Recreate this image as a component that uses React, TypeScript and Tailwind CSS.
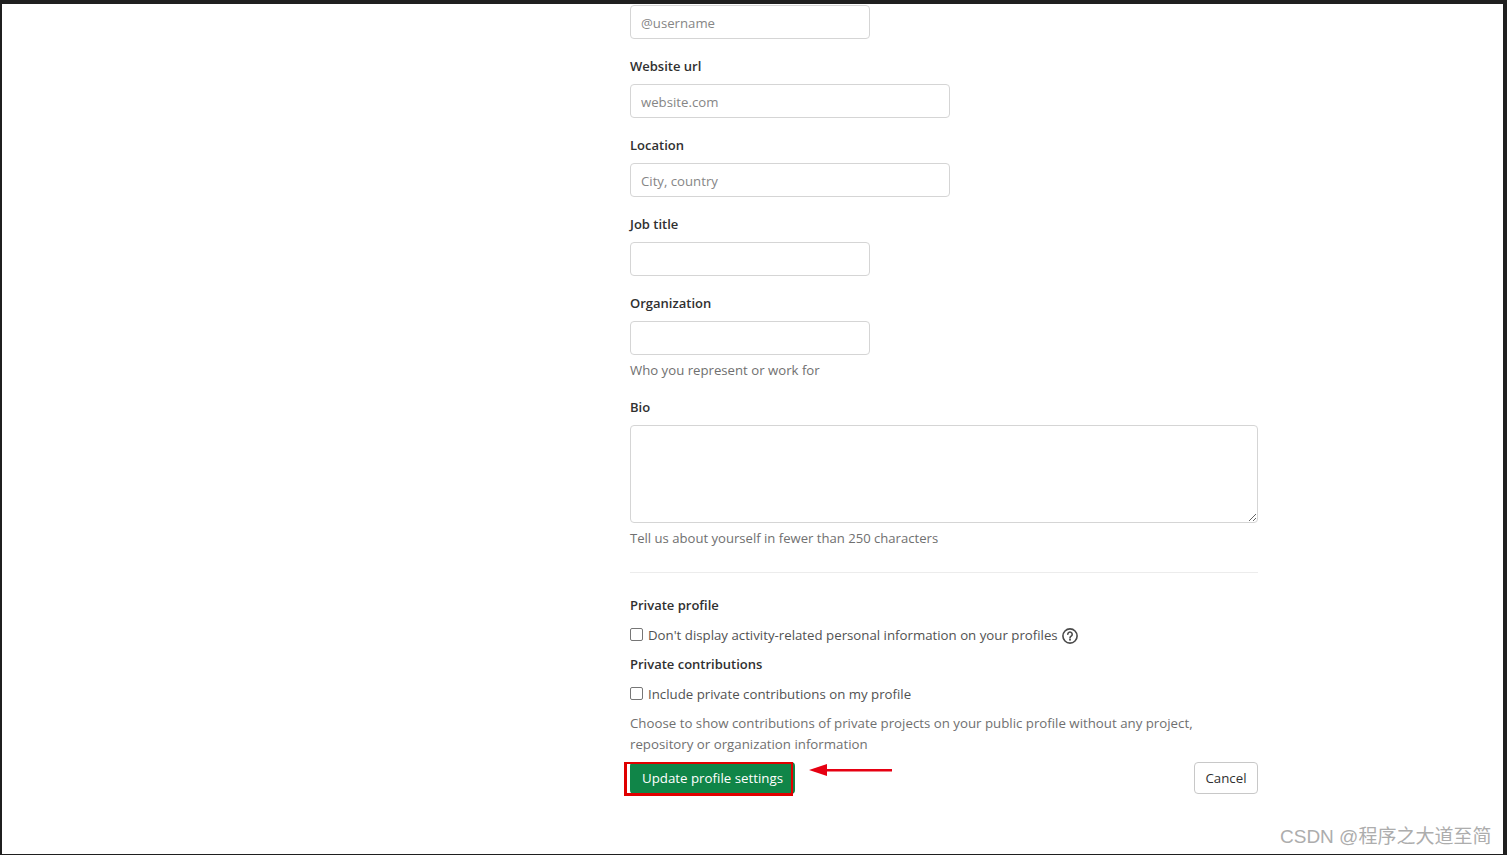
const FONT = "font-['Open_Sans','Noto_Sans',sans-serif]"
const LABEL = 'h-5 text-[13px] leading-5 font-semibold text-[#303030]'
const HELP = 'text-[13.2px] leading-5 text-[#707070]'

function Field({ label, placeholder, short }: { label?: string; placeholder?: string; short?: boolean }) {
  return (
    <div className="mb-[17px]">
      {label && <label className={`mb-2 block ${LABEL}`}>{label}</label>}
      <input
        placeholder={placeholder}
        className={`block h-[34px] rounded-[4px] border border-[#d5d5d5] bg-white px-[10px] pt-[2px] text-[13.2px] text-[#303030] placeholder:text-[#868686] ${
          short ? 'w-[240px]' : 'w-[320px]'
        }`}
      />
    </div>
  )
}

function CheckRow({ children }: { children: React.ReactNode }) {
  return (
    <div className="-mb-[2px] flex h-[22px] items-center gap-[5px] text-[13.25px] text-[#525252]">
      <span className="-mt-[3px] h-[13px] w-[13px] rounded-[2px] border border-[#767676] bg-white" />
      {children}
    </div>
  )
}

export default function App() {
  return (
    <div className={`relative h-[855px] overflow-hidden border-t-4 border-r-4 border-b border-l-2 border-t-[#1f1f1f] border-r-[#1f1f1f] border-b-[#1f1f1f] border-l-[#1f1f1f] bg-white ${FONT}`}>
      <form className="mt-px ml-[628px] w-[628px]">
        <Field placeholder="@username" short />
        <Field label="Website url" placeholder="website.com" />
        <Field label="Location" placeholder="City, country" />
        <Field label="Job title" short />
        <div className="mb-[17px]">
          <label className={`mb-2 block ${LABEL}`}>Organization</label>
          <input className="block h-[34px] w-[240px] rounded-[4px] border border-[#d5d5d5] bg-white" />
          <p className={`mt-[5px] ${HELP}`}>Who you represent or work for</p>
        </div>

        <label className={`mb-2 block ${LABEL}`}>Bio</label>
        <textarea className="block h-[98px] w-full resize-y rounded-[4px] border border-[#d5d5d5] bg-white" />
        <p className="mt-[5px] text-[13.1px] leading-5 text-[#707070]">Tell us about yourself in fewer than 250 characters</p>

        <hr className="mt-6 mb-[22px] border-[#ececec]" />

        <div className={`mb-[10px] ${LABEL}`}>Private profile</div>
        <CheckRow>
          <span className="-mr-px">Don't display activity-related personal information on your profiles</span>
          <svg viewBox="0 0 16 16" className="h-4 w-4 text-[#4a4a4a]" fill="none" stroke="currentColor" strokeWidth="1.6">
            <circle cx="8" cy="8" r="7.1" />
            <path d="M5.8 6.2a2.2 2.2 0 1 1 3.4 1.9c-.8.5-1.2.9-1.2 1.8" strokeLinecap="round" />
            <circle cx="8" cy="11.8" r="1" fill="currentColor" stroke="none" />
          </svg>
        </CheckRow>
        <div className={`mt-[9px] mb-[10px] ${LABEL}`}>Private contributions</div>
        <CheckRow>Include private contributions on my profile</CheckRow>
        <p className="mt-[9px] text-[13.28px] leading-[21px] text-[#707070]">
          Choose to show contributions of private projects on your public profile without any project,
          <br />
          repository or organization information
        </p>

        <div className="mt-[7px] flex items-start justify-between">
          <button type="button" className="h-[32px] w-[165px] rounded-[4px] bg-[#108548] pt-[2px] text-[13.3px] text-white">
            Update profile settings
          </button>
          <button type="button" className="h-[32px] w-[64px] rounded-[4px] border border-[#c8c8c8] bg-white pt-[2px] text-[13.3px] text-[#303030]">
            Cancel
          </button>
        </div>
      </form>

      {/* annotation over the submit button */}
      <div className="absolute top-[758px] left-[622px] h-[34px] w-[169px] border-t-2 border-r-2 border-b-[3px] border-l-[3px] border-[#e00000]" />
      <svg className="absolute top-[760px] left-[807px] h-3 w-[84px]" viewBox="0 0 84 12">
        <path d="M0 6 L18 0 V5 H83 V7.5 H18 V12 Z" fill="#e60012" />
      </svg>

      <div className="absolute top-[821px] left-[1278px] font-['Liberation_Sans','Noto_Sans_CJK_SC',sans-serif] text-[19px] leading-6 whitespace-nowrap text-[#adadad]">
        CSDN @程序之大道至简
      </div>
    </div>
  )
}
